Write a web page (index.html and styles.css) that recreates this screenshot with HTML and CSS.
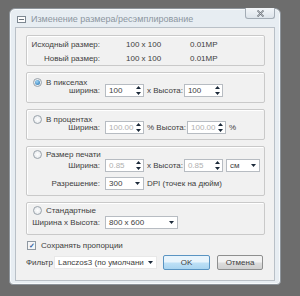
FILE: index.html
```html
<!DOCTYPE html>
<html lang="ru">
<head>
<meta charset="UTF-8">
<title>Изменение размера/ресэмплирование</title>
<link rel="stylesheet" href="styles.css">
</head>
<body>

<div class="window">
    <div class="titlebar">
        <span class="sysicon"></span>
        <span class="title">Изменение размера/ресэмплирование</span>
        <span class="close">
            <svg width="9" height="7" viewBox="0 0 9 7"><path d="M1.5 0.5 L7.5 6.5 M7.5 0.5 L1.5 6.5" fill="none" stroke="#5f666e" stroke-width="1.6"/><path d="M1.5 0.5 L7.5 6.5 M7.5 0.5 L1.5 6.5" fill="none" stroke="#f4f6f8" stroke-width="0.5"/></svg>
        </span>
    </div>

    <div class="client">
        <div class="group info">
            <div class="info-row">
                <span class="lbl">Исходный размер:</span>
                <span class="val">100 x 100</span>
                <span class="val">0.01MP</span>
            </div>
            <div class="info-row">
                <span class="lbl">Новый размер:</span>
                <span class="val">100 x 100</span>
                <span class="val">0.01MP</span>
            </div>
        </div>

        <div class="group g-pix">
            <div class="radio-line"><span class="radio checked"></span>В пикселах</div>
            <div class="row">
                <span class="lbl">ширина:</span>
                <span class="spin"><span class="txt">100</span><svg class="arrows" width="5" height="9" viewBox="0 0 5 9"><path d="M2.5 0 L5 3 L0 3 Z M0 6 L5 6 L2.5 9 Z" fill="#1c2a3a"/></svg></span>
                <span class="mid">x Высота:</span>
                <span class="spin"><span class="txt">100</span><svg class="arrows" width="5" height="9" viewBox="0 0 5 9"><path d="M2.5 0 L5 3 L0 3 Z M0 6 L5 6 L2.5 9 Z" fill="#1c2a3a"/></svg></span>
            </div>
        </div>

        <div class="group g-pct">
            <div class="radio-line"><span class="radio"></span>В процентах</div>
            <div class="row">
                <span class="lbl">Ширина:</span>
                <span class="spin off"><span class="txt">100.00</span><svg class="arrows" width="5" height="9" viewBox="0 0 5 9"><path d="M2.5 0 L5 3 L0 3 Z M0 6 L5 6 L2.5 9 Z" fill="#1c2a3a"/></svg></span>
                <span class="mid">% Высота:</span>
                <span class="spin off"><span class="txt">100.00</span><svg class="arrows" width="5" height="9" viewBox="0 0 5 9"><path d="M2.5 0 L5 3 L0 3 Z M0 6 L5 6 L2.5 9 Z" fill="#1c2a3a"/></svg></span>
                <span class="after">%</span>
            </div>
        </div>

        <div class="group g-print">
            <div class="radio-line"><span class="radio"></span>Размер печати</div>
            <div class="row">
                <span class="lbl">Ширина:</span>
                <span class="spin off"><span class="txt">0.85</span><svg class="arrows" width="5" height="9" viewBox="0 0 5 9"><path d="M2.5 0 L5 3 L0 3 Z M0 6 L5 6 L2.5 9 Z" fill="#1c2a3a"/></svg></span>
                <span class="mid">x Высота:</span>
                <span class="spin off"><span class="txt">0.85</span><svg class="arrows" width="5" height="9" viewBox="0 0 5 9"><path d="M2.5 0 L5 3 L0 3 Z M0 6 L5 6 L2.5 9 Z" fill="#1c2a3a"/></svg></span>
                <span class="select unit"><span class="txt">см</span><svg class="caret" width="5" height="3" viewBox="0 0 5 3"><path d="M0 0 L5 0 L2.5 3 Z" fill="#1c2a3a"/></svg></span>
            </div>
            <div class="row row2">
                <span class="lbl">Разрешение:</span>
                <span class="select dpi"><span class="txt">300</span><svg class="caret" width="5" height="3" viewBox="0 0 5 3"><path d="M0 0 L5 0 L2.5 3 Z" fill="#1c2a3a"/></svg></span>
                <span class="after">DPI (точек на дюйм)</span>
            </div>
        </div>

        <div class="group g-std">
            <div class="radio-line"><span class="radio"></span>Стандартные</div>
            <div class="row">
                <span class="lbl">Ширина x Высота:</span>
                <span class="select std"><span class="txt">800 x 600</span><svg class="caret" width="5" height="3" viewBox="0 0 5 3"><path d="M0 0 L5 0 L2.5 3 Z" fill="#1c2a3a"/></svg></span>
            </div>
        </div>

        <div class="check-line"><span class="check">&#10003;</span>Сохранять пропорции</div>

        <div class="bottom">
            <span class="flbl">Фильтр</span>
            <span class="select filter"><span class="txt">Lanczos3 (по умолчани</span><svg class="caret" width="5" height="3" viewBox="0 0 5 3"><path d="M0 0 L5 0 L2.5 3 Z" fill="#1c2a3a"/></svg></span>
            <span class="btn ok">OK</span>
            <span class="btn">Отмена</span>
        </div>
    </div>
</div>

</body>
</html>
```

FILE: styles.css
```css
body {
    margin: 0;
    padding: 8px 0 0 9px;
    background: #6d6d6d;
    font-family: "Liberation Sans", Arial, sans-serif;
    font-size: 8px;
    color: #404040;
    height: 296px;
    box-sizing: border-box;
    overflow: hidden;
}
.window {
    width: 272px;
    height: 277px;
    box-sizing: border-box;
    background: #e7edf2;
    border: 1px solid #8d949b;
    border-radius: 6px 6px 4px 4px;
    box-shadow: inset 0 0 0 1px #f7fafc;
    padding: 0 5px 4px 5px;
}
.titlebar {
    height: 18px;
    display: flex;
    align-items: center;
    position: relative;
}
.sysicon {
    width: 7px;
    height: 5px;
    border: 1px solid #7d8892;
    background: #fdfdfd;
    margin: 2px 5px 0 2px;
    position: relative;
}
.sysicon::after {
    content: "";
    position: absolute;
    left: 1px;
    right: 1px;
    top: 2px;
    height: 1px;
    background: #6a737c;
}
.title {
    font-size: 9px;
    color: #8c96a0;
    margin-top: 2px;
}
.close {
    position: absolute;
    right: 0;
    top: -1px;
    width: 28px;
    height: 10px;
    border: 1px solid #a3acb5;
    border-top: none;
    border-radius: 0 0 3px 3px;
    background: linear-gradient(#f3f6f9, #dde4ea);
    display: flex;
    align-items: center;
    justify-content: center;
}
.client {
    height: 254px;
    background: #f1f1f1;
    border: 1px solid #b9c0c7;
    padding: 7px 9px 0 10px;
    box-sizing: border-box;
}
.group {
    border: 1px solid #c9c9c9;
    border-radius: 2px;
    box-shadow: inset 1px 1px 0 #ffffff;
    margin-bottom: 6px;
}
.info {
    padding-top: 1px;
}
.info-row {
    display: flex;
    height: 14px;
    align-items: center;
}
.lbl {
    width: 73px;
    text-align: right;
    margin-right: 5px;
    flex-shrink: 0;
}
.info .lbl {
    margin-right: 26px;
}
.val {
    width: 64px;
}
.radio-line {
    height: 10px;
    display: flex;
    align-items: center;
    padding-left: 6px;
}
.radio {
    width: 7px;
    height: 7px;
    border: 1px solid #9aa3ab;
    border-radius: 50%;
    background: radial-gradient(#ffffff, #dfe3e7);
    margin-right: 4px;
    position: relative;
}
.radio.checked::after {
    content: "";
    position: absolute;
    left: 1px;
    top: 1px;
    width: 5px;
    height: 5px;
    border-radius: 50%;
    background: radial-gradient(circle at 40% 35%, #9fd4f5, #1f6fae);
}
.row {
    display: flex;
    align-items: center;
    height: 13px;
}
.g-pix, .g-pct {
    padding: 4px 0 5px;
}
.g-pix .row, .g-pct .row {
    margin-top: -3px;
}
.g-print {
    padding: 2px 0 5px;
}
.g-print .row2 {
    margin-top: 5px;
}
.g-std {
    padding: 2px 0 5px;
    margin-bottom: 5px;
}
.g-std .row {
    margin-top: 1px;
}
.spin, .select {
    height: 13px;
    box-sizing: border-box;
    border: 1px solid #b7bcc2;
    background: #ffffff;
    display: flex;
    align-items: center;
    padding-left: 3px;
    position: relative;
}
.spin {
    width: 39px;
}
.spin.off .txt {
    color: #b0b0b0;
}
.arrows {
    position: absolute;
    right: 2px;
    top: 1px;
}
.caret {
    position: absolute;
    right: 3px;
    top: 4px;
}
.mid {
    margin: 0 1px 0 3px;
}
.after {
    margin-left: 3px;
}
.unit {
    width: 34px;
    margin-left: 3px;
}
.dpi {
    width: 39px;
}
.std {
    width: 73px;
}
.check-line {
    display: flex;
    align-items: center;
    height: 10px;
    padding-left: 1px;
}
.check {
    width: 7px;
    height: 7px;
    border: 1px solid #8f98a1;
    background: #f4f6f8;
    margin-right: 5px;
    font-size: 7px;
    line-height: 7px;
    color: #3564a0;
    text-align: center;
    font-weight: bold;
}
.bottom {
    display: flex;
    align-items: center;
    margin-top: 5px;
    height: 15px;
}
.flbl {
    width: 28px;
}
.filter {
    width: 103px;
    border-color: #e8e8e8;
}
.btn {
    height: 15px;
    box-sizing: border-box;
    display: flex;
    align-items: center;
    justify-content: center;
    border: 1px solid #8e8f8f;
    border-radius: 2px;
    background: linear-gradient(#f2f2f2 45%, #dcdcdc 55%, #d0d0d0);
    width: 46px;
    margin-left: 7px;
}
.btn.ok {
    border-color: #5a94c2;
    background: linear-gradient(#e8f4fc 45%, #bde0f6 55%, #a9d4f0);
    width: 47px;
    margin-left: 6px;
}
```
